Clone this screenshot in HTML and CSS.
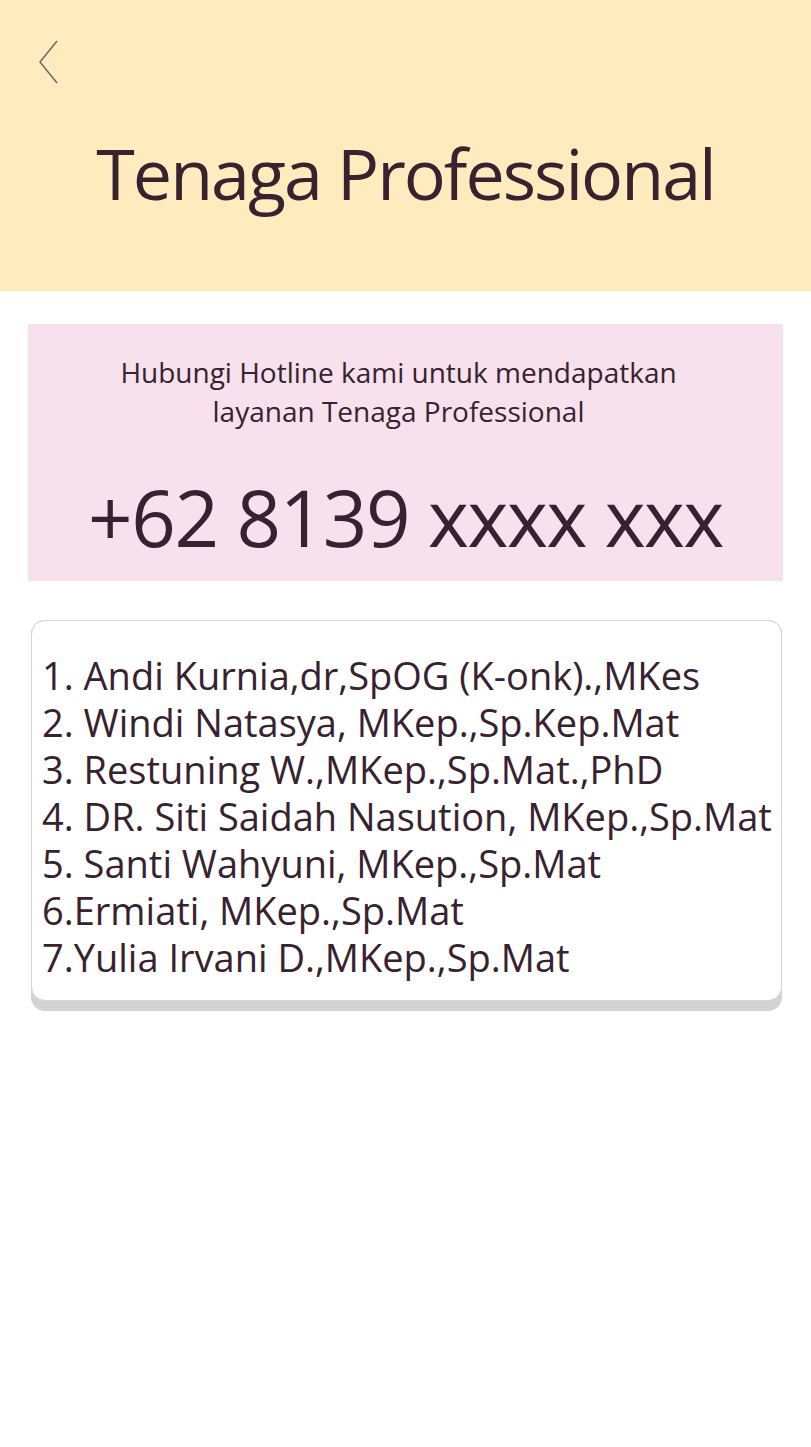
FILE: index.html
```html
<!DOCTYPE html>
<html lang="id">
<head>
<meta charset="utf-8">
<title>Tenaga Professional</title>
<link rel="stylesheet" href="styles.css">
</head>
<body>
<header class="header">
  <div class="back">
    <svg width="20" height="44" viewBox="0 0 20 44"><polyline points="18,1 1,22 18,43" fill="none" stroke="#6e6e6e" stroke-width="1.6"/></svg>
  </div>
  <h1 class="title">Tenaga Professional</h1>
</header>
<main class="main">
  <section class="hotline">
    <p class="hotline-text">Hubungi Hotline kami untuk mendapatkan<br>layanan Tenaga Professional</p>
    <p class="phone">+62 8139 xxxx xxx</p>
  </section>
  <div class="card-shadow">
    <section class="card">
      <div class="list">
        <div>1. Andi Kurnia,dr,SpOG (K-onk).,MKes</div>
        <div>2. Windi Natasya, MKep.,Sp.Kep.Mat</div>
        <div>3. Restuning W.,MKep.,Sp.Mat.,PhD</div>
        <div>4. DR. Siti Saidah Nasution, MKep.,Sp.Mat</div>
        <div>5. Santi Wahyuni, MKep.,Sp.Mat</div>
        <div>6.Ermiati, MKep.,Sp.Mat</div>
        <div>7.Yulia Irvani D.,MKep.,Sp.Mat</div>
      </div>
    </section>
  </div>
</main>
</body>
</html>
```
FILE: styles.css
```css
* { box-sizing: border-box; }
html, body { margin: 0; padding: 0; background: #ffffff; }
body {
  font-family: "Open Sans", "Noto Sans", sans-serif;
  color: #38222f;
  width: 811px;
}
.header {
  background: #ffebbd;
  height: 291px;
  padding: 40px 0 0 39px;
  display: flex;
  flex-direction: column;
}
.back { height: 44px; line-height: 0; }
.title {
  margin: 41px 0 0 -39px;
  font-weight: 400;
  font-size: 70px;
  letter-spacing: -2px;
  line-height: 96px;
  text-align: center;
}
.main {
  padding: 33px 28px 0 28px;
}
.hotline {
  background: #f6e1ec;
  height: 257px;
  padding-top: 29px;
  text-align: center;
}
.hotline-text {
  margin: 0;
  font-size: 28px;
  line-height: 39px;
  letter-spacing: 0;
  padding-right: 14px;
}
.phone {
  margin: 41px 0 0 0;
  font-size: 78px;
  line-height: 90px;
  letter-spacing: -1.4px;
}
.card-shadow {
  margin: 39px 1px 0 3px;
  background: #d3d3d3;
  border-radius: 14px;
  padding-bottom: 10px;
}
.card {
  border: 1px solid #d6d6d6;
  border-radius: 14px;
  background: #fff;
  height: 381px;
  padding: 31px 0 0 10px;
}
.list div {
  font-size: 38px;
  line-height: 47px;
  letter-spacing: 0;
  white-space: nowrap;
}
```
